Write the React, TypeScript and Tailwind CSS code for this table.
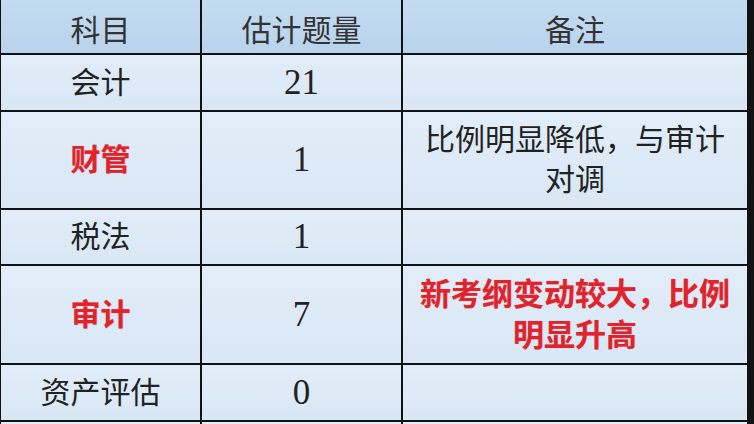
const rows: { subject: string; count: string; note: string[]; red?: boolean; noteRed?: boolean }[] = [
	{ subject: "会计", count: "21", note: [] },
	{ subject: "财管", count: "1", note: ["比例明显降低，与审计", "对调"], red: true },
	{ subject: "税法", count: "1", note: [] },
	{ subject: "审计", count: "7", note: ["新考纲变动较大，比例", "明显升高"], red: true, noteRed: true },
	{ subject: "资产评估", count: "0", note: [] },
	{ subject: "", count: "", note: [] },
]

const font = { fontFamily: '"Liberation Serif", "Noto Sans CJK SC", serif' }

function Cell({ children, head = false, red = false, className = "" }: { children?: React.ReactNode; head?: boolean; red?: boolean; className?: string }) {
	const bg = head ? "bg-gradient-to-b from-[#c4dcf1] to-[#b9d3ec] pt-[8px]" : "bg-gradient-to-b from-[#e1edf8] to-[#d9e7f5]"
	const color = red ? "text-[#e3232c] font-bold [text-shadow:0_0_1px_rgba(120,0,0,0.35)]" : head ? "text-[#333]" : "text-[#222]"
	return (
		<div className={`${bg} ${color} flex flex-col items-center justify-center text-center text-[30px] leading-[40px] ${className}`}>{children}</div>
	)
}

export default function App() {
	return (
		<div className="w-[754px] h-[424px] overflow-hidden bg-[#121212]" style={font}>
			<div className="grid grid-cols-[199px_199px_344px] grid-rows-[53px_55px_96px_54px_97px_55px_40px] gap-[2px] pl-[1px] pr-[2px] w-[749px] bg-[#121212]">
				<Cell head>科目</Cell>
				<Cell head>估计题量</Cell>
				<Cell head>备注</Cell>
				{rows.map((r, i) => (
					<div key={i} className="contents">
						<Cell red={r.red}>{r.subject}</Cell>
						<Cell className="text-[35px]">{r.count}</Cell>
						<Cell red={r.noteRed} className={r.noteRed ? "text-[31px] leading-[41px]" : ""}>
							{r.note.map((line) => (
								<span key={line}>{line}</span>
							))}
						</Cell>
					</div>
				))}
			</div>
		</div>
	)
}
